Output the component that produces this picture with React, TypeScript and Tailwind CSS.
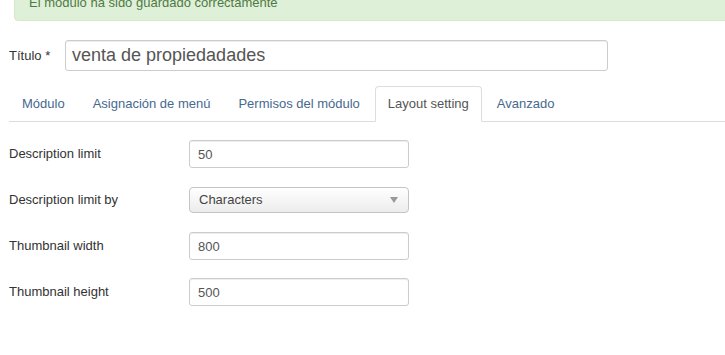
const tabs = ["Módulo", "Asignación de menú", "Permisos del módulo", "Layout setting", "Avanzado"];

const fields = [
  { label: "Description limit", value: "50" },
  { label: "Description limit by", value: "Characters", select: true },
  { label: "Thumbnail width", value: "800" },
  { label: "Thumbnail height", value: "500" },
];

export default function App() {
  return (
    <div
      className="h-[355px] w-[725px] overflow-hidden bg-white pl-[9px] text-[13px] leading-[18px] text-[#333]"
      style={{ fontFamily: '"Liberation Sans", Arial, sans-serif' }}
    >
      <div className="-mr-4 ml-[5px] mt-[-15px] rounded-[4px] border border-[#d6e9c6] bg-[#dff0d8] py-[8px] pl-[14px] text-[#4f7a45]">
        El módulo ha sido guardado correctamente
      </div>

      <div className="mt-[19px] flex items-center">
        <label className="w-[56px] text-[13px] text-[#333]">
          Título <span className="text-[#333]">*</span>
        </label>
        <input
          readOnly
          value="venta de propiedadades"
          className="h-[31px] w-[543px] rounded-[3px] border border-[#ccc] px-[6px] text-[18px] text-[#555] shadow-[inset_0_1px_1px_rgba(0,0,0,0.075)] outline-none"
        />
      </div>

      <ul className="mt-[15px] flex border-b border-[#ddd]">
        {tabs.map((t) => {
          const active = t === "Layout setting";
          return (
            <li key={t} className="-mb-px mr-[2px]">
              <span
                className={
                  active
                    ? "block rounded-t-[4px] border border-[#ddd] border-b-white bg-white px-[12px] py-[8px] text-[#555]"
                    : "block border border-transparent px-[12px] py-[8px] text-[#46698f]"
                }
              >
                {t}
              </span>
            </li>
          );
        })}
      </ul>

      <div className="mt-[18px] flex flex-col gap-[18px]">
        {fields.map((f) => (
          <div key={f.label} className="flex h-[28px] items-center">
            <div className="w-[180px] text-[#333]">{f.label}</div>
            {f.select ? (
              <div className="flex h-[26px] w-[220px] items-center justify-between rounded-[4px] border border-[#c4c4c4] bg-gradient-to-b from-white to-[#ececec] pl-[9px] pr-[8px] text-[#444]">
                <span>{f.value}</span>
                <svg width="8" height="6" viewBox="0 0 8 6" className="mr-[2px]">
                  <path d="M0 0h8L4 6z" fill="#999" />
                </svg>
              </div>
            ) : (
              <input
                readOnly
                value={f.value}
                className="h-[28px] w-[220px] rounded-[3px] border border-[#ccc] px-[8px] text-[13px] text-[#555] shadow-[inset_0_1px_1px_rgba(0,0,0,0.075)] outline-none"
              />
            )}
          </div>
        ))}
      </div>
    </div>
  );
}
